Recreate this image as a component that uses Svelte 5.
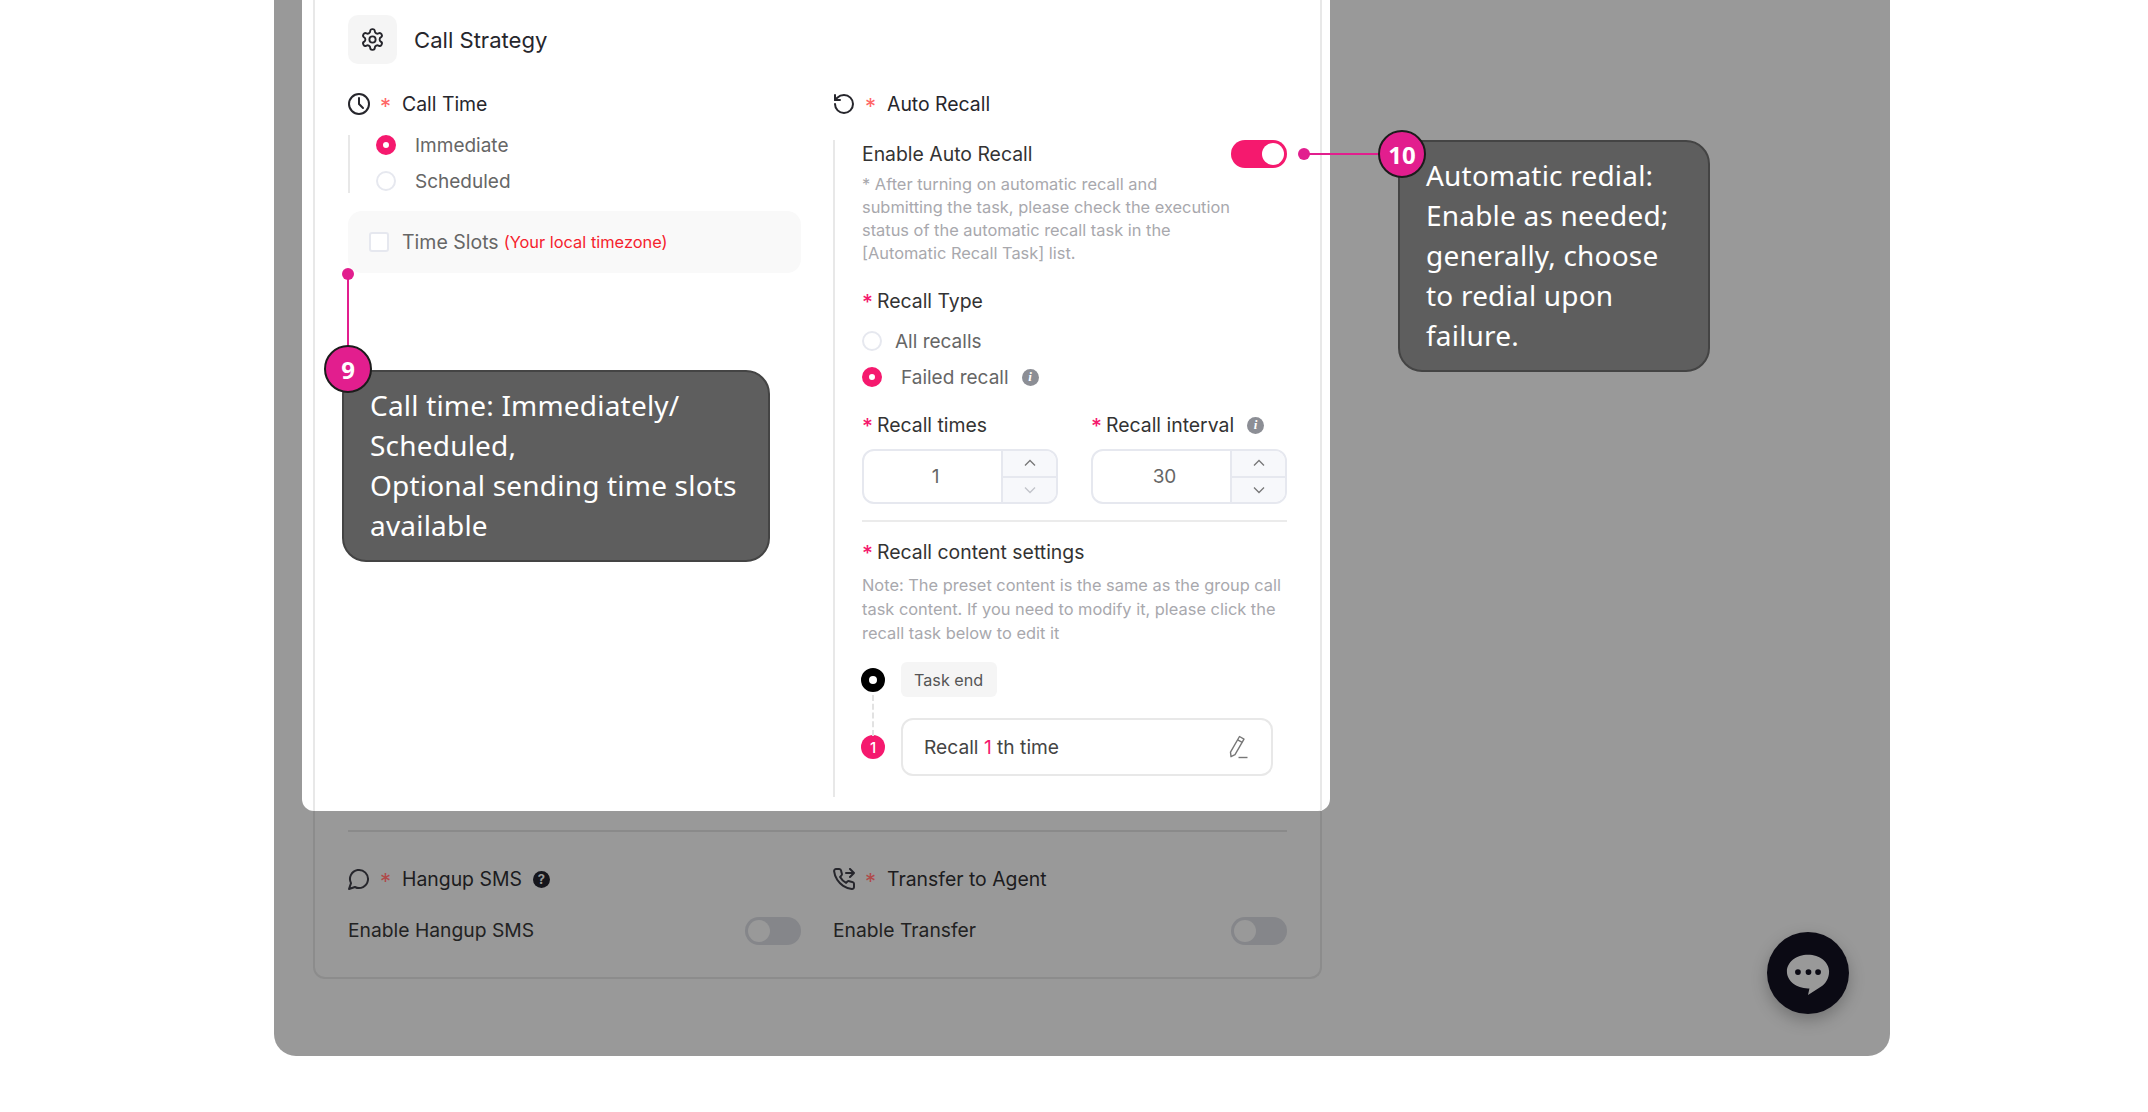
<script>
	const steppers = [
		{ label: 'Recall times', value: 1, info: false, upDim: false, downDim: true },
		{ label: 'Recall interval', value: 30, info: true, upDim: false, downDim: false }
	];
</script>

<div class="page">
	<div class="panel">
		<div class="card">
			<hr class="rule dark" />
			<div class="cols">
				<div>
					<div class="title">
						<svg class="ico" viewBox="1 1 22 22"><path d="M7.9 20A9 9 0 1 0 4 16.1L2 22z" /></svg>
						<span class="star muted">*</span>
						<span>Hangup SMS</span>
						<span class="help">?</span>
					</div>
					<div class="switch-row">
						<span class="lift">Enable Hangup SMS</span>
						<span class="toggle off"><i></i></span>
					</div>
				</div>
				<div>
					<div class="title">
						<svg class="ico" viewBox="1 1 22 22"><path d="M14 6h8M18 2l4 4-4 4" /><path d="M22 16.9v3a2 2 0 0 1-2.2 2 19.8 19.8 0 0 1-8.6-3.1 19.5 19.5 0 0 1-6-6 19.8 19.8 0 0 1-3.1-8.7A2 2 0 0 1 4.1 2h3a2 2 0 0 1 2 1.7c.1 1 .4 1.9.7 2.8a2 2 0 0 1-.5 2.1L8.1 9.9a16 16 0 0 0 6 6l1.3-1.3a2 2 0 0 1 2.1-.4c.9.3 1.8.6 2.8.7a2 2 0 0 1 1.7 2z" /></svg>
						<span class="star muted">*</span>
						<span>Transfer to Agent</span>
					</div>
					<div class="switch-row">
						<span class="lift">Enable Transfer</span>
						<span class="toggle off"><i></i></span>
					</div>
				</div>
			</div>
		</div>

		<div class="modal">
			<div class="frame">
				<div class="head">
					<div class="head-icon">
						<svg viewBox="0 0 24 24"><path d="M12.22 2h-.44a2 2 0 0 0-2 2v.18a2 2 0 0 1-1 1.73l-.43.25a2 2 0 0 1-2 0l-.15-.08a2 2 0 0 0-2.73.73l-.22.38a2 2 0 0 0 .73 2.73l.15.1a2 2 0 0 1 1 1.72v.51a2 2 0 0 1-1 1.74l-.15.09a2 2 0 0 0-.73 2.73l.22.38a2 2 0 0 0 2.73.73l.15-.08a2 2 0 0 1 2 0l.43.25a2 2 0 0 1 1 1.73V20a2 2 0 0 0 2 2h.44a2 2 0 0 0 2-2v-.18a2 2 0 0 1 1-1.73l.43-.25a2 2 0 0 1 2 0l.15.08a2 2 0 0 0 2.73-.73l.22-.39a2 2 0 0 0-.73-2.73l-.15-.08a2 2 0 0 1-1-1.74v-.5a2 2 0 0 1 1-1.74l.15-.09a2 2 0 0 0 .73-2.73l-.22-.38a2 2 0 0 0-2.73-.73l-.15.08a2 2 0 0 1-2 0l-.43-.25a2 2 0 0 1-1-1.73V4a2 2 0 0 0-2-2z" /><circle cx="12" cy="12" r="3" /></svg>
					</div>
					<span class="head-text">Call Strategy</span>
				</div>

				<div class="cols top">
					<div>
						<div class="title">
							<svg class="ico" viewBox="1 1 22 22"><circle cx="12" cy="12" r="10" /><path d="M12 6v6l4 4" /></svg>
							<span class="star">*</span>
							<span>Call Time</span>
						</div>
						<div class="radio-group">
							<label class="radio"><span class="dot on"></span><span class="wide">Immediate</span></label>
							<label class="radio"><span class="dot"></span><span class="wide">Scheduled</span></label>
						</div>
						<div class="slots">
							<span class="box"></span>
							<span class="slots-label">Time Slots</span>
							<span class="zone">(Your local timezone)</span>
						</div>
					</div>

					<div>
						<div class="title">
							<svg class="ico" viewBox="1 1 22 22"><path d="M3 12a9 9 0 1 0 9-9 9.75 9.75 0 0 0-6.74 2.74L3 8" /><path d="M3 3v5h5" /></svg>
							<span class="star">*</span>
							<span>Auto Recall</span>
						</div>
						<div class="recall">
							<div class="enable">
								<span>Enable Auto Recall</span>
								<span class="toggle"><i></i></span>
							</div>
							<p class="note first">* After turning on automatic recall and<br />submitting the task, please check the execution<br />status of the automatic recall task in the<br />[Automatic Recall Task] list.</p>

							<div class="req type"><b>*</b>Recall Type</div>
							<div class="radios">
								<label class="radio"><span class="dot"></span><span>All recalls</span></label>
								<label class="radio"><span class="dot on"></span><span class="failed">Failed recall</span><span class="info">i</span></label>
							</div>

							<div class="pair">
								{#each steppers as s}
									<div>
										<div class="req"><b>*</b>{s.label}{#if s.info}<span class="info">i</span>{/if}</div>
										<div class="num">
											<span class="val">{s.value}</span>
											<div class="steps">
												<span class:dim={s.upDim}><svg viewBox="0 0 12 8"><path d="M1 6.5l5-5 5 5" /></svg></span>
												<span class:dim={s.downDim}><svg viewBox="0 0 12 8"><path d="M1 1.5l5 5 5-5" /></svg></span>
											</div>
										</div>
									</div>
								{/each}
							</div>

							<hr class="rule" />

							<div class="req content"><b>*</b>Recall content settings</div>
							<p class="note second">Note: The preset content is the same as the group call<br />task content. If you need to modify it, please click the<br />recall task below to edit it</p>

							<div class="timeline">
								<span class="connector"></span>
								<div class="step">
									<span class="node end"></span>
									<span class="tag">Task end</span>
								</div>
								<div class="step">
									<span class="node num-node">1</span>
									<div class="task">
										<span>Recall <em>1</em> th time</span>
										<svg viewBox="0 0 24 24"><path d="M14.500 1.500l4.500 2.600-9 15.600-4 2-.5-4.600z" /><path d="M12.700 4.800l4.500 2.600" /><path d="M13.500 22.500h9" /></svg>
									</div>
								</div>
							</div>
						</div>
					</div>
				</div>
			</div>
		</div>

		<div class="lead v"></div>
		<div class="lead h"></div>
		<div class="pin pin-a"></div>
		<div class="pin pin-b"></div>

		<div class="callout one">Call time: Immediately/<br />Scheduled,<br />Optional sending time slots<br />available</div>
		<div class="badge b-one">9</div>
		<div class="callout two">Automatic redial:<br />Enable as needed;<br />generally, choose<br />to redial upon<br />failure.</div>
		<div class="badge b-two">10</div>

		<div class="chat">
			<svg viewBox="0 0 48 44"><path d="M24 2C11.8 2 2 9.700 2 19.500S11.800 37 24 37c.6 0 1 0 1.500 0L24 44l13-8.500C42.500 32.500 46 26.500 46 19.500 46 9.700 36.200 2 24 2z" /><circle cx="13.500" cy="20" r="3" class="c" /><circle cx="24.500" cy="20" r="3" class="c" /><circle cx="34.500" cy="20" r="3" class="c" /></svg>
		</div>
	</div>
</div>

<style>
	:global(body) {
		margin: 0;
		background: #fff;
	}
	.page {
		width: 2148px;
		height: 1112px;
		overflow: hidden;
		font-family: Inter, 'Noto Sans', sans-serif;
		color: #222;
	}
	.panel {
		position: relative;
		margin-left: 274px;
		width: 1616px;
		height: 1056px;
		background: #999;
		border-radius: 0 0 22px 22px;
	}
	.card {
		box-sizing: border-box;
		margin-left: 39px;
		width: 1009px;
		height: 979px;
		padding: 0 33px 32px;
		border: 2px solid #8c8c8c;
		border-top: 0;
		border-radius: 0 0 12px 12px;
		display: flex;
		flex-direction: column;
		justify-content: flex-end;
		color: #1c1c20;
	}
	.rule {
		height: 2px;
		border: 0;
		margin: 16px 0 0;
		background: #ebebeb;
	}
	.rule.dark {
		margin: 0 0 36px;
		background: #8a8a8a;
	}
	.cols {
		display: grid;
		grid-template-columns: 453px 454px;
		column-gap: 32px;
	}
	.cols.top {
		margin-top: 29px;
	}
	.title {
		display: flex;
		align-items: center;
		height: 22px;
		font-size: 19.400px;
		font-weight: 420;
		color: #26262c;
	}
	.ico {
		width: 22px;
		height: 22px;
		fill: none;
		stroke: #26262c;
		stroke-width: 2;
		stroke-linecap: round;
		stroke-linejoin: round;
		flex: none;
	}
	.star {
		width: 22px;
		margin-left: 10px;
		color: #f66;
		font-size: 22px;
		line-height: 22px;
		height: 18px;
	}
	.star.muted {
		color: #b04a4a;
	}
	.card .title {
		color: #1c1c20;
	}
	.help {
		display: inline-flex;
		align-items: center;
		justify-content: center;
		width: 17px;
		height: 17px;
		margin-left: 11px;
		border-radius: 50%;
		background: #16161c;
		color: #999;
		font-size: 13px;
		font-weight: 700;
	}
	.switch-row {
		display: flex;
		align-items: center;
		justify-content: space-between;
		height: 28px;
		margin-top: 27px;
		font-size: 19.300px;
		color: #222;
	}
	.lift {
		margin-bottom: 2px;
	}
	.toggle {
		box-sizing: border-box;
		display: flex;
		justify-content: flex-end;
		align-items: center;
		width: 56px;
		height: 28px;
		padding: 3px;
		border-radius: 14px;
		background: #f5196e;
	}
	.toggle i {
		width: 22px;
		height: 22px;
		border-radius: 50%;
		background: #fff;
	}
	.toggle.off {
		justify-content: flex-start;
		background: #85868a;
	}
	.toggle.off i {
		background: #999;
	}
	.modal {
		position: absolute;
		left: 28px;
		top: 0;
		width: 1028px;
		height: 811px;
		background: #fff;
		border-radius: 0 0 12px 12px;
	}
	.frame {
		box-sizing: border-box;
		margin-left: 11px;
		width: 1009px;
		height: 100%;
		padding: 0 33px;
		border-left: 2px solid #e8e8e8;
		border-right: 2px solid #e8e8e8;
	}
	.head {
		display: flex;
		align-items: center;
		gap: 17px;
		padding-top: 15px;
	}
	.head-icon {
		display: flex;
		align-items: center;
		justify-content: center;
		width: 49px;
		height: 49px;
		border-radius: 10px;
		background: #f5f5f5;
	}
	.head-icon svg {
		width: 25px;
		height: 25px;
		fill: none;
		stroke: #26262c;
		stroke-width: 1.800;
		stroke-linejoin: round;
	}
	.head-text {
		font-size: 22.100px;
		font-weight: 420;
		color: #26262c;
	}
	.radio-group {
		display: flex;
		flex-direction: column;
		gap: 16px;
		margin-top: 20px;
		padding: 0 0 2px 26px;
		border-left: 2px solid #e8e8e8;
	}
	.radio {
		display: flex;
		align-items: center;
		height: 20px;
		font-size: 19px;
		color: #666;
	}
	.dot {
		box-sizing: border-box;
		width: 20px;
		height: 20px;
		margin-right: 13px;
		border: 2px solid #e6e8ef;
		border-radius: 50%;
		flex: none;
	}
	.dot.on {
		border: 7px solid #f5196e;
	}
	.wide {
		margin-left: 6px;
	}
	.slots {
		display: flex;
		align-items: center;
		box-sizing: border-box;
		height: 62px;
		margin-top: 18px;
		padding-left: 21px;
		border-radius: 14px;
		background: #f9f9f9;
	}
	.box {
		box-sizing: border-box;
		width: 20px;
		height: 20px;
		margin-right: 13px;
		border: 2px solid #e6e8ef;
		border-radius: 3px;
		background: #fff;
	}
	.slots-label {
		font-size: 19.500px;
		color: #666;
	}
	.zone {
		margin-left: 5px;
		font-size: 16.400px;
		color: #f5222d;
	}
	.recall {
		box-sizing: border-box;
		height: 657px;
		margin-top: 25px;
		padding-left: 27px;
		border-left: 2px solid #e8e8e8;
	}
	.enable {
		display: flex;
		align-items: center;
		justify-content: space-between;
		height: 28px;
		font-size: 19.400px;
		font-weight: 420;
		color: #333;
	}
	.note {
		margin: 0;
		font-size: 16.400px;
		color: #a8a8ad;
	}
	.note.first {
		margin-top: 5px;
		line-height: 23px;
	}
	.note.second {
		margin-top: 10px;
		line-height: 24px;
	}
	.req {
		display: flex;
		align-items: center;
		height: 22px;
		font-size: 19.400px;
		font-weight: 420;
		color: #333;
	}
	.req b {
		width: 15px;
		height: 18px;
		color: #f5196e;
		font-size: 21px;
		font-weight: 500;
		line-height: 22px;
	}
	.req.type {
		margin-top: 25px;
	}
	.req.content {
		margin-top: 19px;
	}
	.radios {
		display: flex;
		flex-direction: column;
		gap: 16px;
		margin-top: 19px;
	}
	.failed {
		margin-left: 6px;
	}
	.info {
		display: inline-flex;
		align-items: center;
		justify-content: center;
		width: 17px;
		height: 17px;
		margin-left: 13px;
		border-radius: 50%;
		background: #8c8e95;
		color: #fff;
		font: italic 700 13px 'Liberation Serif', serif;
	}
	.pair {
		display: grid;
		grid-template-columns: 196px 196px;
		column-gap: 33px;
		margin-top: 27px;
	}
	.num {
		box-sizing: border-box;
		display: flex;
		height: 55px;
		margin-top: 13px;
		border: 2px solid #e6e8ef;
		border-radius: 12px;
		overflow: hidden;
	}
	.val {
		flex: 1;
		display: flex;
		align-items: center;
		justify-content: center;
		padding-left: 6px;
		font-size: 19px;
		color: #666;
	}
	.steps {
		box-sizing: border-box;
		width: 55px;
		display: flex;
		flex-direction: column;
		border-left: 2px solid #e6e8ef;
		background: #f7f8fb;
	}
	.steps span {
		flex: 1;
		display: flex;
		align-items: center;
		justify-content: center;
	}
	.steps span + span {
		border-top: 2px solid #e6e8ef;
	}
	.steps svg {
		width: 12px;
		height: 8px;
		fill: none;
		stroke: #777;
		stroke-width: 1.300;
	}
	.steps .dim svg {
		stroke: #c2c4ca;
	}
	.timeline {
		position: relative;
		display: flex;
		flex-direction: column;
		gap: 21px;
		margin-top: 17px;
	}
	.connector {
		position: absolute;
		left: 10px;
		top: 33px;
		height: 41px;
		border-left: 2px dashed #e2e2e2;
	}
	.step {
		display: flex;
		align-items: center;
	}
	.node {
		box-sizing: border-box;
		width: 24px;
		height: 24px;
		margin: 0 16px 0 -1px;
		border-radius: 50%;
		flex: none;
	}
	.node.end {
		border: 8px solid #000;
		background: #fff;
	}
	.num-node {
		display: flex;
		align-items: center;
		justify-content: center;
		background: #f5196e;
		color: #fff;
		font-size: 15px;
		font-weight: 500;
	}
	.tag {
		display: flex;
		align-items: center;
		height: 35px;
		padding: 0 14px 0 13px;
		border-radius: 6px;
		background: #f5f5f5;
		font-size: 16.200px;
		color: #555;
	}
	.task {
		box-sizing: border-box;
		display: flex;
		align-items: center;
		justify-content: space-between;
		width: 372px;
		height: 58px;
		padding: 0 22px 0 21px;
		border: 2px solid #e8e8e8;
		border-radius: 12px;
		font-size: 19.200px;
		color: #444;
	}
	.task em {
		font-style: normal;
		color: #f5196e;
	}
	.task svg {
		width: 24px;
		height: 24px;
		fill: none;
		stroke: #777;
		stroke-width: 1.400;
		stroke-linejoin: round;
	}
	.lead {
		position: absolute;
		background: #e21e8e;
	}
	.lead.v {
		left: 73px;
		top: 274px;
		width: 2px;
		height: 72px;
	}
	.lead.h {
		left: 1030px;
		top: 153px;
		width: 90px;
		height: 2px;
	}
	.pin {
		position: absolute;
		width: 12px;
		height: 12px;
		border-radius: 50%;
		background: #e21e8e;
	}
	.pin-a {
		left: 68px;
		top: 268px;
	}
	.pin-b {
		left: 1024px;
		top: 148px;
	}
	.callout {
		position: absolute;
		box-sizing: border-box;
		padding: 13px 0 0 26px;
		border: 2px solid #444;
		border-radius: 24px;
		background: #5e5e5e;
		color: #fff;
		font-family: 'Noto Sans', sans-serif;
		font-size: 28px;
		letter-spacing: 0.2px;
		line-height: 40px;
	}
	.callout.one {
		left: 68px;
		top: 370px;
		width: 428px;
		height: 192px;
	}
	.callout.two {
		left: 1124px;
		top: 140px;
		width: 312px;
		height: 232px;
	}
	.badge {
		position: absolute;
		box-sizing: border-box;
		display: flex;
		align-items: center;
		justify-content: center;
		width: 48px;
		height: 48px;
		border: 2px solid #1c1c1c;
		border-radius: 50%;
		background: #e21e8e;
		color: #fff;
		font-family: 'Noto Sans', sans-serif;
		font-size: 24px;
		font-weight: 700;
	}
	.b-one {
		left: 50px;
		top: 345px;
	}
	.b-two {
		left: 1104px;
		top: 130px;
	}
	.chat {
		position: absolute;
		left: 1493px;
		top: 932px;
		display: flex;
		align-items: center;
		justify-content: center;
		width: 82px;
		height: 82px;
		border-radius: 50%;
		background: #0b0a14;
		box-shadow: 0 6px 16px rgba(0, 0, 0, 0.25);
	}
	.chat svg {
		width: 46px;
		height: 44px;
		fill: #999;
		margin-top: 2px;
	}
	.chat .c {
		fill: #0b0a14;
	}
</style>
